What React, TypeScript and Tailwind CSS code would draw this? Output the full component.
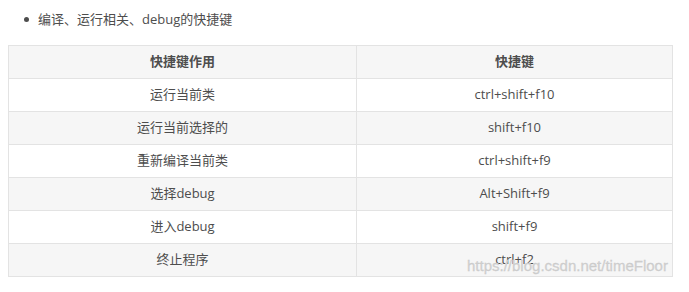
import React from "react";

const rows = [
  ["运行当前类", "ctrl+shift+f10"],
  ["运行当前选择的", "shift+f10"],
  ["重新编译当前类", "ctrl+shift+f9"],
  ["选择debug", "Alt+Shift+f9"],
  ["进入debug", "shift+f9"],
  ["终止程序", "ctrl+f2"],
];

const App = () => {
  return (
    <div className="relative w-[689px] h-[292px] bg-white text-[13px] text-[#4d4d4d] font-['Open_Sans','Noto_Sans_CJK_SC',sans-serif]">
      <ul className="pl-[38px] pt-[9px] h-[45px]">
        <li className="relative leading-[20px]">
          <span className="absolute -left-[14px] top-[8px] w-[5px] h-[5px] rounded-full bg-[#4d4d4d]" />
          编译、运行相关、debug的快捷键
        </li>
      </ul>
      <table className="ml-[8px] w-[665px] border-collapse table-fixed">
        <thead>
          <tr className="bg-[#f6f6f6] h-[33px]">
            <th className="w-[348px] border border-[#e3e3e3] font-bold text-center">快捷键作用</th>
            <th className="border border-[#e3e3e3] font-bold text-center">快捷键</th>
          </tr>
        </thead>
        <tbody>
          {rows.map(([a, b], i) => (
            <tr key={a} className={`h-[33px] ${i % 2 === 1 ? "bg-[#f6f6f6]" : "bg-white"}`}>
              <td className="border border-[#e3e3e3] text-center">{a}</td>
              <td className="border border-[#e3e3e3] text-center">{b}</td>
            </tr>
          ))}
        </tbody>
      </table>
      <span className="absolute left-[467px] top-[256px] text-[15px] leading-[20px] text-[#d0d0d0] font-['Liberation_Sans',sans-serif] [-webkit-text-stroke:0.3px_#c8c8c8] [text-shadow:0_0_1px_#fff]">
        https://blog.csdn.net/timeFloor
      </span>
    </div>
  );
};

export default App;
